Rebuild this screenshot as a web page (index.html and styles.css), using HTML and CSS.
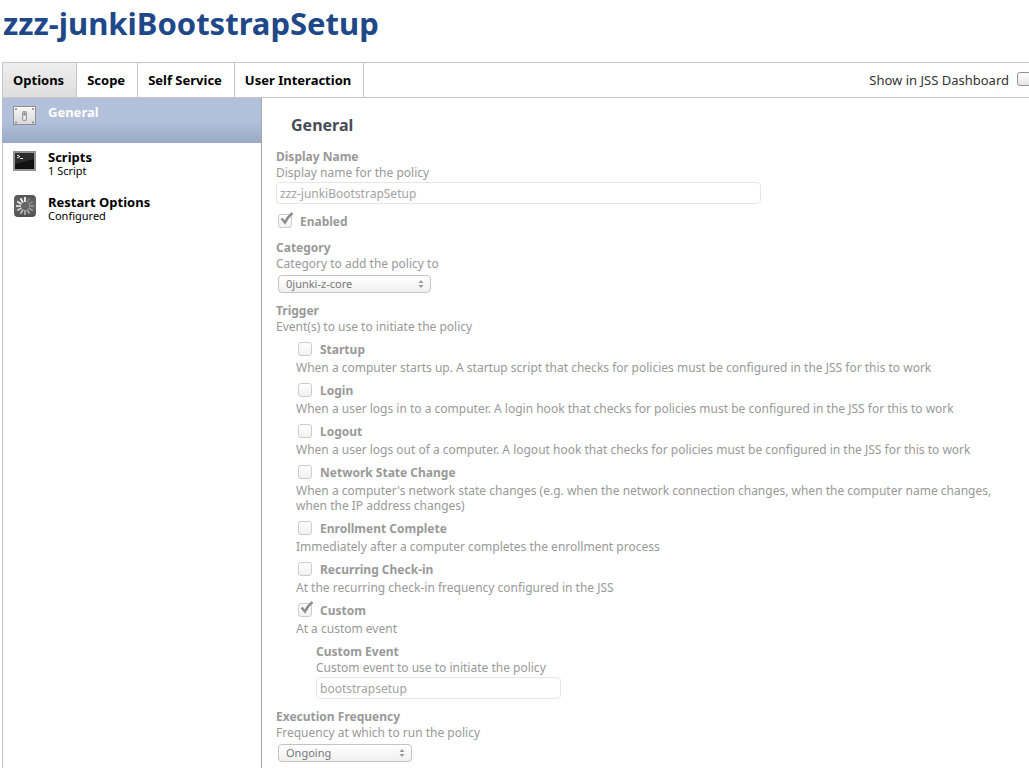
FILE: index.html
```html
<!DOCTYPE html>
<html lang="en">
<head>
<meta charset="utf-8">
<title>zzz-junkiBootstrapSetup</title>
<link rel="stylesheet" href="styles.css">
</head>
<body>
<h1 class="page-title">zzz-junkiBootstrapSetup</h1>
<div class="policy">
  <header class="toolbar">
    <nav class="tabs">
      <button class="tab tab-active" type="button">Options</button>
      <button class="tab" type="button">Scope</button>
      <button class="tab" type="button">Self Service</button>
      <button class="tab" type="button">User Interaction</button>
    </nav>
    <label class="dashboard">Show in JSS Dashboard <input class="check check-live" type="checkbox"></label>
  </header>
  <div class="body">
    <aside class="sidebar">
      <a class="item item-active" href="#general">
        <svg class="icon" viewBox="0 0 24 24">
          <defs><linearGradient id="plate" x2="0" y2="1"><stop offset="0" stop-color="#f8f8f8"/><stop offset="1" stop-color="#d8d8d8"/></linearGradient></defs>
          <rect x=".5" y="1.500" width="22" height="18" fill="url(#plate)" stroke="#8d8f92"/>
          <path d="M1 2.500h21" stroke="#fff"/>
          <g fill="#777"><circle cx="3" cy="4" r=".9"/><circle cx="20" cy="4" r=".9"/><circle cx="3" cy="17.500" r=".9"/><circle cx="20" cy="17.500" r=".9"/></g>
          <rect x="9.500" y="6.500" width="4" height="9" rx="1" fill="#ccc" stroke="#999"/>
          <rect x="10.500" y="7.500" width="2" height="3" fill="#888"/><rect x="10.500" y="10.500" width="2" height="4" fill="#eee"/>
        </svg>
        <span class="item-text"><span class="item-name">General</span></span>
      </a>
      <a class="item" href="#scripts">
        <svg class="icon" viewBox="0 0 24 24">
          <rect x="1" y="2" width="21" height="18" fill="#111" stroke="#929292" stroke-width="2"/>
          <path d="M2 3h19v6L2 14z" fill="#2c2c2c"/>
          <path d="M4 5l3 1.500L4 8M7 8.500H10" fill="none" stroke="#eee"/>
        </svg>
        <span class="item-text"><span class="item-name">Scripts</span><span class="item-note">1 Script</span></span>
      </a>
      <a class="item" href="#restart">
        <svg class="icon" viewBox="0 0 24 24">
          <defs><linearGradient id="tile" x2="0" y2="1"><stop offset="0" stop-color="#555"/><stop offset=".5" stop-color="#686868"/><stop offset="1" stop-color="#505050"/></linearGradient></defs>
          <rect x="1" y="0" width="22" height="22" rx="4" fill="url(#tile)"/>
          <g stroke-width="1.700" stroke="#fff">
            <path d="M12 2v5"/>
            <path d="M12 2v5" transform="rotate(30 12 11)" opacity=".2"/>
            <path d="M12 2v5" transform="rotate(60 12 11)" opacity=".25"/>
            <path d="M12 2v5" transform="rotate(90 12 11)" opacity=".3"/>
            <path d="M12 2v5" transform="rotate(120 12 11)" opacity=".38"/>
            <path d="M12 2v5" transform="rotate(150 12 11)" opacity=".45"/>
            <path d="M12 2v5" transform="rotate(180 12 11)" opacity=".52"/>
            <path d="M12 2v5" transform="rotate(210 12 11)" opacity=".6"/>
            <path d="M12 2v5" transform="rotate(240 12 11)" opacity=".7"/>
            <path d="M12 2v5" transform="rotate(270 12 11)" opacity=".8"/>
            <path d="M12 2v5" transform="rotate(300 12 11)" opacity=".88"/>
            <path d="M12 2v5" transform="rotate(330 12 11)" opacity=".95"/>
          </g>
        </svg>
        <span class="item-text"><span class="item-name">Restart Options</span><span class="item-note">Configured</span></span>
      </a>
    </aside>
    <main class="content">
      <h2 class="section-title">General</h2>
      <div class="field">
        <label class="label" for="name">Display Name</label>
        <p class="hint">Display name for the policy</p>
        <input class="text" id="name" type="text" value="zzz-junkiBootstrapSetup" disabled>
      </div>
      <label class="option"><input class="check" type="checkbox" checked disabled>Enabled</label>
      <div class="field">
        <label class="label" for="category">Category</label>
        <p class="hint">Category to add the policy to</p>
        <select class="select select-wide" id="category" disabled><option>0junki-z-core</option></select>
      </div>
      <div class="field">
        <div class="label">Trigger</div>
        <p class="hint">Event(s) to use to initiate the policy</p>
        <div class="triggers">
          <div class="trigger">
            <label class="option"><input class="check" type="checkbox" disabled>Startup</label>
            <p class="detail">When a computer starts up. A startup script that checks for policies must be configured in the JSS for this to work</p>
          </div>
          <div class="trigger">
            <label class="option"><input class="check" type="checkbox" disabled>Login</label>
            <p class="detail">When a user logs in to a computer. A login hook that checks for policies must be configured in the JSS for this to work</p>
          </div>
          <div class="trigger">
            <label class="option"><input class="check" type="checkbox" disabled>Logout</label>
            <p class="detail">When a user logs out of a computer. A logout hook that checks for policies must be configured in the JSS for this to work</p>
          </div>
          <div class="trigger">
            <label class="option"><input class="check" type="checkbox" disabled>Network State Change</label>
            <p class="detail">When a computer's network state changes (e.g. when the network connection changes, when the computer name changes, when the IP address changes)</p>
          </div>
          <div class="trigger">
            <label class="option"><input class="check" type="checkbox" disabled>Enrollment Complete</label>
            <p class="detail">Immediately after a computer completes the enrollment process</p>
          </div>
          <div class="trigger">
            <label class="option"><input class="check" type="checkbox" disabled>Recurring Check-in</label>
            <p class="detail">At the recurring check-in frequency configured in the JSS</p>
          </div>
          <div class="trigger">
            <label class="option"><input class="check" type="checkbox" checked disabled>Custom</label>
            <p class="detail">At a custom event</p>
          </div>
          <div class="subfield">
            <label class="label" for="event">Custom Event</label>
            <p class="hint">Custom event to use to initiate the policy</p>
            <input class="text text-short" id="event" type="text" value="bootstrapsetup" disabled>
          </div>
        </div>
      </div>
      <div class="field">
        <label class="label" for="frequency">Execution Frequency</label>
        <p class="hint">Frequency at which to run the policy</p>
        <select class="select" id="frequency" disabled><option>Ongoing</option></select>
      </div>
    </main>
  </div>
</div>
</body>
</html>
```

FILE: styles.css
```css
* { box-sizing: border-box; }

body {
  margin: 0;
  min-height: 100vh;
  display: flex;
  flex-direction: column;
  overflow: hidden;
  background: #fff;
  color: #000;
  font: 12px/16px "Noto Sans", "Open Sans", sans-serif;
}

h1, h2, p { margin: 0; }

.page-title {
  padding: 3px 3px 19px;
  color: #204889;
  font-size: 31px;
  line-height: 40px;
}

.policy {
  flex: 1;
  display: flex;
  flex-direction: column;
  margin-left: 2px;
  border-left: 1px solid #c6c6c6;
}

.toolbar {
  display: flex;
  justify-content: space-between;
  height: 36px;
  border: solid #c6c6c6;
  border-width: 1px 0;
}

.tabs { display: flex; }

.tab {
  padding: 0 12px 0 10px;
  border: 0;
  border-right: 1px solid #c6c6c6;
  background: #fff;
  color: #000;
  font: bold 13px/16px "Noto Sans", "Open Sans", sans-serif;
}

.tab-active { background: linear-gradient(#eee, #dedede); }

.dashboard {
  display: flex;
  align-items: center;
  gap: 8px;
  margin-right: -2px;
  color: #333;
  font-size: 13px;
}

.body { flex: 1; display: flex; }

.sidebar {
  flex: none;
  width: 259px;
  border-right: 1px solid #a8a8a8;
}

.item {
  display: flex;
  gap: 11px;
  height: 45px;
  padding: 6px 10px;
  color: #000;
  text-decoration: none;
}

.item-active {
  margin-left: -1px;
  padding-left: 11px;
  background: linear-gradient(#b2c0da 50%, #99aac8);
  color: #fff;
}

.icon { width: 24px; height: 24px; margin-top: 1px; }

.item-text { display: flex; flex-direction: column; }
.item-name { font-size: 13px; font-weight: bold; line-height: 16px; }
.item-note { font-size: 11px; line-height: 12px; }

.content {
  flex: 1;
  min-width: 0;
  padding: 17px 14px 6px;
  color: #999;
}

.section-title {
  margin: 0 0 14px 15px;
  color: #484d58;
  font-size: 16px;
  line-height: 20px;
}

.field { margin-bottom: 9px; }
.label { display: block; font-weight: bold; }

.text {
  display: block;
  width: 485px;
  max-width: 100%;
  height: 22px;
  margin-top: 1px;
  padding: 0 3px;
  border: 1px solid #e6e6e6;
  border-radius: 4px;
  background: #fff;
  color: #a3a3a3;
  font: 12px/16px "Noto Sans", "Open Sans", sans-serif;
}

.text-short { width: 245px; }

.select {
  appearance: none;
  display: block;
  width: 134px;
  height: 18px;
  margin: 3px 0 10px 2px;
  padding: 0 20px 0 7px;
  border: 1px solid #c4c4c4;
  border-radius: 4px;
  background:
    url("data:image/svg+xml,%3Csvg xmlns='http://www.w3.org/2000/svg' width='6' height='8'%3E%3Cpath d='M3 0l2.500 3h-5zM3 8l2.500-3h-5z' fill='%23999'/%3E%3C/svg%3E") no-repeat right 6px center,
    linear-gradient(#fff, #f0f0f0);
  color: #777;
  font: 11px/16px "Noto Sans", "Open Sans", sans-serif;
  opacity: 1;
}

.select-wide { width: 153px; }

.option {
  display: flex;
  align-items: center;
  gap: 8px;
  height: 18px;
  padding-left: 2px;
  font-weight: bold;
}

.content > .option { margin-bottom: 9px; }

.check {
  appearance: none;
  position: relative;
  flex: none;
  width: 14px;
  height: 14px;
  margin: 0 0 2px;
  border: 1px solid #ccc;
  border-radius: 3px;
  background: linear-gradient(#fff, #f1f1f1);
}

.check-live { border-color: #919191; background: linear-gradient(#fff, #e6e6e6); }

.check:checked::after {
  content: "";
  position: absolute;
  left: 1px;
  top: -3px;
  width: 14px;
  height: 14px;
  background: url("data:image/svg+xml,%3Csvg xmlns='http://www.w3.org/2000/svg' width='14' height='14'%3E%3Cpath d='M1.500 6.500l3.500 4Q7.500 5 12.500 1' fill='none' stroke='%238c8c8c' stroke-width='2.500'/%3E%3C/svg%3E");
}

.triggers {
  display: flex;
  flex-direction: column;
  gap: 7px;
  margin-top: 6px;
  padding-left: 20px;
}

.detail { margin-top: 1px; line-height: 15px; }
.subfield { margin-top: 1px; padding: 0 0 1px 20px; }
```
